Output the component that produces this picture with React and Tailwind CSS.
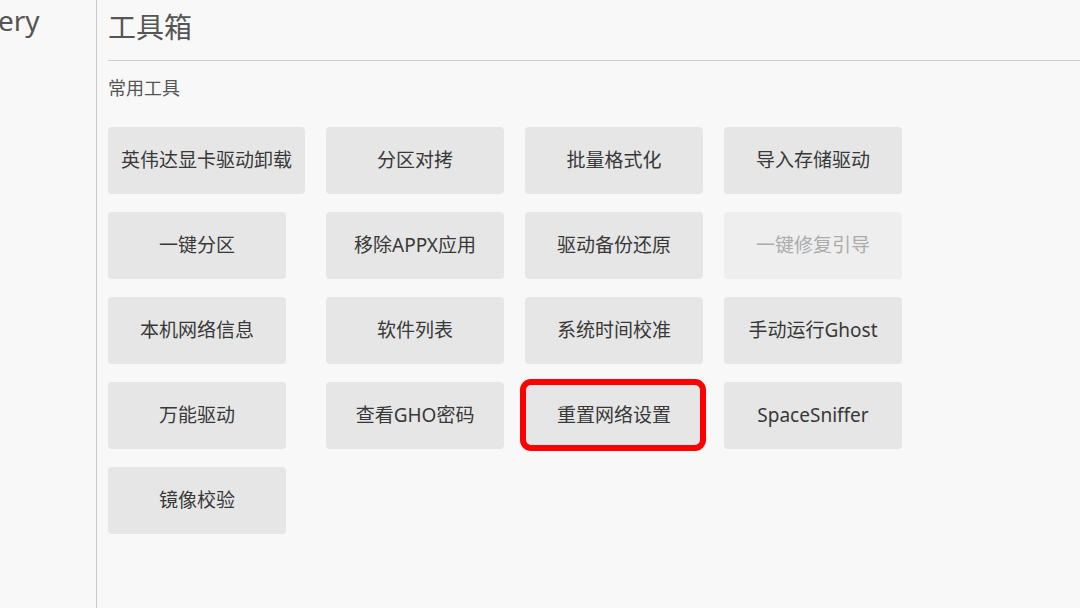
const tools = [
  { label: "英伟达显卡驱动卸载" },
  { label: "分区对拷" },
  { label: "批量格式化" },
  { label: "导入存储驱动" },
  { label: "一键分区" },
  { label: "移除APPX应用" },
  { label: "驱动备份还原" },
  { label: "一键修复引导", disabled: true },
  { label: "本机网络信息" },
  { label: "软件列表" },
  { label: "系统时间校准" },
  { label: "手动运行Ghost" },
  { label: "万能驱动" },
  { label: "查看GHO密码" },
  { label: "重置网络设置", highlighted: true },
  { label: "SpaceSniffer" },
  { label: "镜像校验" },
];

function ToolButton({ label, disabled, highlighted }) {
  return (
    <div className="relative">
      <button
        type="button"
        disabled={disabled}
        className={
          disabled
            ? "flex h-[67px] min-w-[178px] items-center justify-center rounded-[4px] bg-[#eeeeee] px-[13px] text-[19px] text-[#ababab]"
            : "flex h-[67px] min-w-[178px] items-center justify-center rounded-[4px] bg-[#e6e6e6] px-[13px] text-[19px] text-[#383838]"
        }
      >
        {label}
      </button>
      {highlighted ? (
        <span className="pointer-events-none absolute -left-[5px] -right-[3px] -top-[3px] -bottom-[2px] rounded-[11px] border-[6px] border-[#ff0000]" />
      ) : null}
    </div>
  );
}

export default function App() {
  return (
    <div
      className="flex h-[608px] w-[1080px] overflow-hidden bg-[#f8f8f8]"
      style={{ fontFamily: '"Noto Sans", "Noto Sans CJK SC", sans-serif' }}
    >
      <aside className="w-[97px] shrink-0 overflow-hidden border-r border-[#cbcbcb]">
        <p className="-ml-[2px] pt-[2px] text-[28px] leading-[36px] text-[#555555]">ery</p>
      </aside>

      <main className="flex-1 pl-[11px] pt-[13px]">
        <h1 className="border-b border-[#cccccc] pb-[19px] text-[28px] leading-[28px] font-normal text-[#555555]">
          工具箱
        </h1>
        <h2 className="mt-[18px] text-[18px] leading-[18px] text-[#555555]">常用工具</h2>

        <div className="mt-[30px] grid grid-cols-[repeat(4,max-content)] justify-items-start gap-x-[21px] gap-y-[18px]">
          {tools.map((tool) => (
            <ToolButton key={tool.label} {...tool} />
          ))}
        </div>
      </main>
    </div>
  );
}
